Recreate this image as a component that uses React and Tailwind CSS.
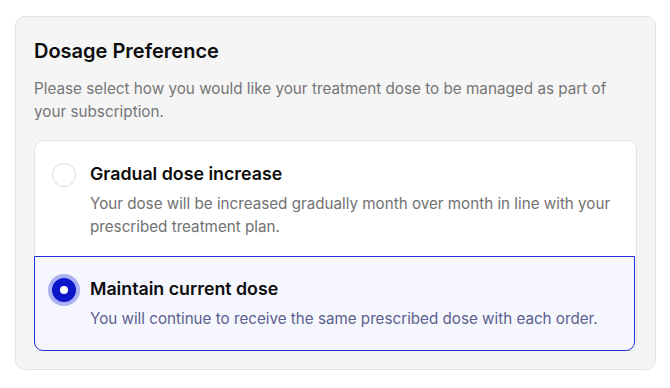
import { useState } from 'react';

const options = [
    {
        id: 'gradual',
        title: 'Gradual dose increase',
        desc: 'Your dose will be increased gradually month over month in line with your prescribed treatment plan.',
    },
    {
        id: 'maintain',
        title: 'Maintain current dose',
        desc: 'You will continue to receive the same prescribed dose with each order.',
    },
];

const Radio = ({ checked }) => {
    if (checked) {
        return (
            <span className="mt-[2px] flex h-6 w-6 shrink-0 items-center justify-center rounded-full bg-[#0a17c9] ring-4 ring-[#a9b1f2]">
                <span className="h-2 w-2 rounded-full bg-white" />
            </span>
        );
    }
    return <span className="mt-[2px] h-6 w-6 shrink-0 rounded-full border border-[#dcdcdc] bg-white" />;
};

const App = () => {
    const [selected, setSelected] = useState('maintain');

    return (
        <div className="min-h-screen bg-white pl-[15px] pr-[14px] pt-[16px] font-['Inter',sans-serif]">
            <section className="rounded-[10px] border border-[#e4e4e4] bg-[#f5f5f5] px-[18px] pb-[18px] pt-[20px]">
                <h2 className="text-[20px] font-semibold leading-7 text-[#0d0d0d]">Dosage Preference</h2>
                <p className="mt-[12px] text-[15.25px] leading-[23px] text-[#757575]">
                    Please select how you would like your treatment dose to be managed as part of your subscription.
                </p>

                <div className="mt-[17px] rounded-[9px] border border-[#e2e2e2] bg-white">
                    {options.map((opt, i) => {
                        const on = selected === opt.id;
                        return (
                            <button
                                key={opt.id}
                                onClick={() => setSelected(opt.id)}
                                className={
                                    'flex w-full gap-[14px] px-[17px] text-left ' +
                                    (i === 0 ? 'rounded-t-[9px] pb-[19px] pt-[20px] ' : 'rounded-b-[9px] pb-[20px] pt-[19px] ') +
                                    (on ? '-m-px w-[calc(100%+2px)] border border-[#1d33d6] bg-[#f5f6fe]' : '')
                                }
                            >
                                <Radio checked={on} />
                                <div className="flex flex-col">
                                    <span className="text-[17.8px] font-semibold leading-[26px] text-[#0d0d0d]">{opt.title}</span>
                                    <span className={'mt-[5px] text-[15.2px] leading-[23px] ' + (on ? 'text-[#5c5f8e]' : 'text-[#717171]')}>
                                        {opt.desc}
                                    </span>
                                </div>
                            </button>
                        );
                    })}
                </div>
            </section>
        </div>
    );
};

export default App;
